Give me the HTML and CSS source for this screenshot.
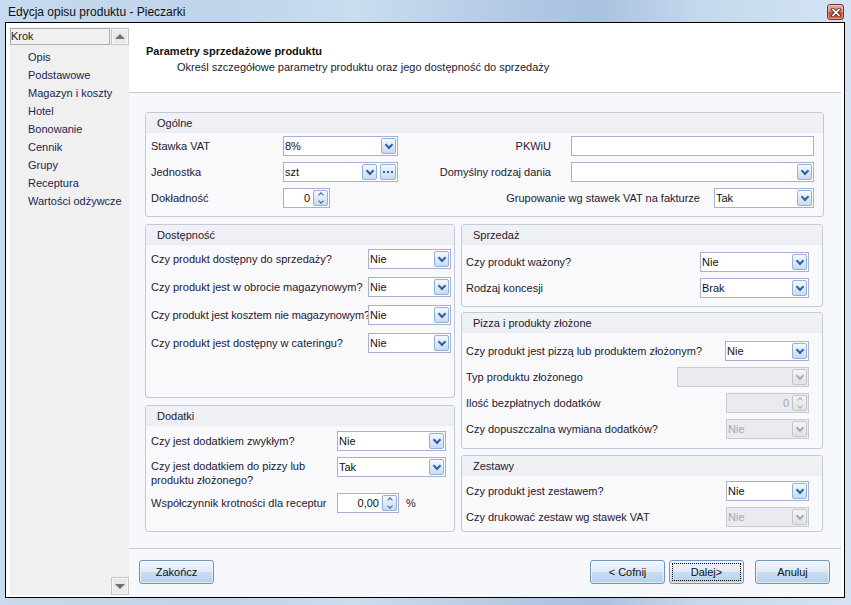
FILE: index.html
```html
<!DOCTYPE html>
<html lang="pl">
<head>
<meta charset="utf-8">
<title>Edycja opisu produktu - Pieczarki</title>
<link rel="stylesheet" href="styles.css">
</head>
<body>
<div class="window">
  <div class="titlebar">
    <span class="title">Edycja opisu produktu - Pieczarki</span>
    <span class="close"><svg width="10" height="9" viewBox="0 0 10 9"><path d="M2 1.5 L8 7.5 M8 1.5 L2 7.5" stroke="#5b2a22" stroke-width="3.4" stroke-linecap="square"/><path d="M2 1.5 L8 7.5 M8 1.5 L2 7.5" stroke="#ffffff" stroke-width="1.7" stroke-linecap="square"/></svg></span>
  </div>
  <div class="client">
    <aside class="sidebar">
      <div class="nav">
        <div class="nav-head">Krok</div>
        <ul class="nav-list">
          <li>Opis</li>
          <li>Podstawowe</li>
          <li>Magazyn i koszty</li>
          <li>Hotel</li>
          <li>Bonowanie</li>
          <li>Cennik</li>
          <li>Grupy</li>
          <li>Receptura</li>
          <li>Wartości odżywcze</li>
        </ul>
      </div>
      <div class="vscroll">
        <span class="sbtn up"></span>
        <span class="sbtn down"></span>
      </div>
    </aside>
    <main class="main">
      <header class="page-head">
        <h1>Parametry sprzedażowe produktu</h1>
        <p>Określ szczegółowe parametry produktu oraz jego dostępność do sprzedaży</p>
      </header>
      <div class="content">
        <section class="group h105">
          <div class="gh">Ogólne</div>
          <div class="og-body">
            <span class="lbl">Stawka VAT</span>
            <span class="field w115"><span class="val">8%</span><span class="dd"></span></span>
            <span class="og-r"><span class="lbl mr20">PKWiU</span><span class="field w243"></span></span>

            <span class="lbl">Jednostka</span>
            <span class="field w115"><span class="val">szt</span><span class="dd"></span><span class="dd ell"></span></span>
            <span class="og-r"><span class="lbl mr20">Domyślny rodzaj dania</span><span class="field w243"><span class="val"></span><span class="dd"></span></span></span>

            <span class="lbl">Dokładność</span>
            <span class="field w47"><span class="val num">0</span><span class="dd spin"></span></span>
            <span class="og-r"><span class="lbl mr14">Grupowanie wg stawek VAT na fakturze</span><span class="field w100"><span class="val">Tak</span><span class="dd"></span></span></span>
          </div>
        </section>

        <div class="cols">
          <div class="col col-left">
            <section class="group h174">
              <div class="gh">Dostępność</div>
              <div class="rows rows-dost">
                <div class="row"><span class="lbl">Czy produkt dostępny do sprzedaży?</span><span class="field w83"><span class="val">Nie</span><span class="dd"></span></span></div>
                <div class="row"><span class="lbl">Czy produkt jest w obrocie magazynowym?</span><span class="field w83"><span class="val">Nie</span><span class="dd"></span></span></div>
                <div class="row"><span class="lbl tight">Czy produkt jest kosztem nie magazynowym?</span><span class="field w83"><span class="val">Nie</span><span class="dd"></span></span></div>
                <div class="row"><span class="lbl">Czy produkt jest dostępny w cateringu?</span><span class="field w83"><span class="val">Nie</span><span class="dd"></span></span></div>
              </div>
            </section>
            <section class="group h127 mt7">
              <div class="gh">Dodatki</div>
              <div class="rows rows-dod">
                <div class="row"><span class="lbl fixed">Czy jest dodatkiem zwykłym?</span><span class="field w109"><span class="val">Nie</span><span class="dd"></span></span></div>
                <div class="row tall"><span class="lbl fixed two">Czy jest dodatkiem do pizzy lub<br>produktu złożonego?</span><span class="field w109"><span class="val">Tak</span><span class="dd"></span></span></div>
                <div class="row"><span class="lbl fixed">Współczynnik krotności dla receptur</span><span class="field w62"><span class="val num">0,00</span><span class="dd spin"></span></span><span class="pct">%</span></div>
              </div>
            </section>
          </div>

          <div class="col col-right">
            <section class="group h83">
              <div class="gh">Sprzedaż</div>
              <div class="rows rows-sprz">
                <div class="row"><span class="lbl">Czy produkt ważony?</span><span class="field w109"><span class="val">Nie</span><span class="dd"></span></span></div>
                <div class="row"><span class="lbl">Rodzaj koncesji</span><span class="field w109"><span class="val">Brak</span><span class="dd"></span></span></div>
              </div>
            </section>
            <section class="group h137 mt5">
              <div class="gh">Pizza i produkty złożone</div>
              <div class="rows rows-pizza">
                <div class="row"><span class="lbl">Czy produkt jest pizzą lub produktem złożonym?</span><span class="field w84"><span class="val">Nie</span><span class="dd"></span></span></div>
                <div class="row"><span class="lbl">Typ produktu złożonego</span><span class="field dis w132"><span class="val"></span><span class="dd"></span></span></div>
                <div class="row"><span class="lbl">Ilość bezpłatnych dodatków</span><span class="field dis w83"><span class="val num">0</span><span class="dd spin"></span></span></div>
                <div class="row"><span class="lbl">Czy dopuszczalna wymiana dodatków?</span><span class="field dis w83"><span class="val">Nie</span><span class="dd"></span></span></div>
              </div>
            </section>
            <section class="group h77 mt6">
              <div class="gh">Zestawy</div>
              <div class="rows rows-zest">
                <div class="row"><span class="lbl">Czy produkt jest zestawem?</span><span class="field w83"><span class="val">Nie</span><span class="dd"></span></span></div>
                <div class="row"><span class="lbl">Czy drukować zestaw wg stawek VAT</span><span class="field dis w83"><span class="val">Nie</span><span class="dd"></span></span></div>
              </div>
            </section>
          </div>
        </div>
      </div>
      <footer class="footer">
        <span class="btn btn-end">Zakończ</span>
        <span class="btn mr4">&lt; Cofnij</span>
        <span class="btn focus mr11">Dalej&gt;</span>
        <span class="btn">Anuluj</span>
      </footer>
    </main>
  </div>
</div>
</body>
</html>
```

FILE: styles.css
```css
* { box-sizing: border-box; }
html, body { margin: 0; padding: 0; }
body {
  width: 851px;
  height: 605px;
  overflow: hidden;
  font-family: "Liberation Sans", Arial, sans-serif;
  font-size: 11px;
  color: #1e2030;
}

.window {
  width: 851px;
  height: 605px;
  display: flex;
  flex-direction: column;
  background: linear-gradient(90deg, #c7daef 0%, #bfd4eb 25%, #cadcf0 42%, #b0c8e2 62%, #a9c2de 70%, #c4d8ed 82%, #d4e4f5 100%);
}

.titlebar {
  height: 22px;
  display: flex;
  align-items: center;
  padding-left: 8px;
}
.title {
  flex: 1;
  font-size: 12px;
  color: #111;
  padding-top: 2px;
}
.close {
  align-self: flex-start;
  width: 17px;
  height: 16px;
  margin: 4px 7px 0 0;
  border: 1px solid #6b3b33;
  border-radius: 3px;
  background: linear-gradient(#eab1a2 0%, #d9806a 45%, #c9482a 55%, #d46c4f 100%);
  box-shadow: inset 0 0 0 1px rgba(255,255,255,0.3);
  display: flex;
  align-items: center;
  justify-content: center;
}

.client {
  flex: 1;
  min-height: 0;
  margin: 0 6px 7px 5px;
  border: 1px solid #000;
  background: #fff;
  display: flex;
}

/* sidebar */
.sidebar {
  width: 119px;
  margin: 4px 0 2px 4px;
  background: #f0f0f0;
  display: flex;
}
.nav { width: 101px; }
.nav-head {
  width: 100px;
  height: 17px;
  margin-top: 1px;
  border: 1px solid #adadad;
  background: #f0f0f0;
  line-height: 15px;
  color: #1a1a1a;
}
.nav-list {
  list-style: none;
  margin: 0;
  padding: 3px 0 0 18px;
}
.nav-list li {
  line-height: 18px;
  white-space: nowrap;
  color: #1c2550;
}
.vscroll {
  width: 18px;
  display: flex;
  flex-direction: column;
  justify-content: space-between;
  padding-top: 1px;
}
.sbtn {
  height: 17px;
  border: 1px solid #c6c6c6;
  background: #e9e9e9;
  box-shadow: inset 0 0 0 1px #f6f6f6;
  display: flex;
  align-items: center;
  justify-content: center;
}
.sbtn.down { height: 18px; }
.sbtn.up::before {
  content: "";
  border-left: 5px solid transparent;
  border-right: 5px solid transparent;
  border-bottom: 5px solid #707070;
}
.sbtn.down::before {
  content: "";
  border-left: 5px solid transparent;
  border-right: 5px solid transparent;
  border-top: 5px solid #707070;
}

/* main */
.main {
  flex: 1;
  margin-right: 3px;
  display: flex;
  flex-direction: column;
  background: #f7f8fb;
}
.page-head {
  height: 70px;
  background: #fff;
  border-bottom: 1px solid #c6cadb;
  padding-top: 20px;
}
.page-head h1 {
  margin: 0;
  padding-left: 17px;
  font-size: 11px;
  font-weight: bold;
  line-height: 16px;
  color: #111;
}
.page-head p {
  margin: 0;
  padding-left: 48px;
  line-height: 16px;
  color: #1e2030;
}

.content {
  flex: 1;
  padding: 19px 17px 0 16px;
}

.group {
  border: 1px solid #c4c8dc;
  border-radius: 3px;
  background: #f9f9fb;
  overflow: hidden;
}
.gh {
  height: 20px;
  line-height: 20px;
  padding-left: 11px;
  background: linear-gradient(#f1f2f6, #eceef3);
  color: #1e2030;
}
.h105 { height: 105px; }
.h174 { height: 174px; }
.h127 { height: 127px; }
.h83 { height: 83px; }
.h137 { height: 137px; }
.h77 { height: 77px; }
.mt5 { margin-top: 5px; }
.mt6 { margin-top: 6px; }
.mt7 { margin-top: 7px; }

.og-body {
  display: grid;
  grid-template-columns: 132px 115px 1fr;
  grid-auto-rows: 20px;
  row-gap: 6px;
  align-items: center;
  padding: 3px 9px 0 5px;
}
.og-r {
  display: flex;
  justify-content: flex-end;
  align-items: center;
}
.mr20 { margin-right: 20px; }
.mr14 { margin-right: 14px; }

.cols {
  display: flex;
  gap: 6px;
  margin-top: 7px;
}
.col { display: flex; flex-direction: column; }
.col-left { width: 310px; }
.col-right { width: 362px; }

.rows {
  display: flex;
  flex-direction: column;
  gap: 8px;
}
.rows-dost { padding: 4px 3px 0 5px; }
.rows-dod { padding: 5px 8px 0 5px; gap: 6px; }
.rows-sprz { padding: 7px 13px 0 4px; gap: 6px; }
.rows-pizza { padding: 8px 13px 0 4px; gap: 6px; }
.rows-zest { padding: 5px 13px 0 4px; gap: 6px; }

.row {
  display: flex;
  align-items: center;
  height: 20px;
}
.row .lbl {
  flex: 1;
  min-width: 0;
  white-space: nowrap;
}
.row .lbl.tight { letter-spacing: -0.1px; }
.row .lbl.fixed { flex: 0 0 186px; }
.row.tall {
  height: auto;
  align-items: flex-start;
}
.lbl.two {
  white-space: normal;
  line-height: 14px;
  padding-top: 2px;
}
.lbl { white-space: nowrap; }
.pct { margin-left: 7px; }

/* editors */
.field {
  flex-shrink: 0;
  height: 20px;
  border: 1px solid #a9aed4;
  background: #fff;
  display: flex;
  align-items: center;
  padding: 1px;
  color: #111;
}
.field .val {
  flex: 1;
  min-width: 0;
  white-space: nowrap;
  overflow: hidden;
  line-height: 16px;
}
.field .val.num {
  text-align: right;
  padding-right: 3px;
}
.w47 { width: 47px; }
.w62 { width: 62px; }
.w83 { width: 83px; }
.w84 { width: 84px; }
.w100 { width: 100px; }
.w109 { width: 109px; }
.w115 { width: 115px; }
.w132 { width: 132px; }
.w243 { width: 243px; }

.dd {
  flex-shrink: 0;
  width: 15px;
  height: 16px;
  border: 1px solid #8fb2d8;
  border-radius: 2px;
  background: linear-gradient(#f5f9fd 0%, #dde9f7 50%, #c7dbf1 100%);
  display: flex;
  align-items: center;
  justify-content: center;
}
.dd::before {
  content: "";
  width: 4px;
  height: 4px;
  border-right: 2px solid #2f62a3;
  border-bottom: 2px solid #2f62a3;
  transform: rotate(45deg);
  margin-top: -3px;
}
.dd.ell {
  width: 16px;
  margin-left: 3px;
}
.dd.ell::before {
  width: 2px;
  height: 2px;
  border: 0;
  margin: 0;
  transform: none;
  background: #2f62a3;
  box-shadow: -4px 0 0 #2f62a3, 4px 0 0 #2f62a3;
}
.dd.spin {
  flex-direction: column;
  gap: 2px;
}
.dd.spin::before {
  width: 3px;
  height: 3px;
  border: 0;
  border-left: 1.5px solid #2f62a3;
  border-top: 1.5px solid #2f62a3;
  margin: 1px 0 0;
}
.dd.spin::after {
  content: "";
  width: 3px;
  height: 3px;
  border-right: 1.5px solid #2f62a3;
  border-bottom: 1.5px solid #2f62a3;
  transform: rotate(45deg);
  margin-bottom: 1px;
}

.field.dis {
  background: #eaebef;
  border-color: #c6c9d6;
  color: #a4a8b4;
}
.field.dis .dd {
  border-color: #c4c6ce;
  background: linear-gradient(#f4f4f5, #e1e2e5);
}
.field.dis .dd::before,
.field.dis .dd::after {
  border-color: #a9acb4;
}

/* footer */
.footer {
  height: 49px;
  border-top: 1px solid #c6cadb;
  display: flex;
  align-items: flex-start;
  padding: 11px 11px 0 10px;
}
.btn {
  position: relative;
  width: 75px;
  height: 24px;
  border: 1px solid #7096bc;
  border-radius: 3px;
  background: linear-gradient(#eef5fc 0%, #dfebf8 48%, #c9ddf1 52%, #b6d0ea 100%);
  box-shadow: inset 0 0 0 1px rgba(255,255,255,0.55);
  display: flex;
  align-items: center;
  justify-content: center;
  color: #111;
}
.btn-end { margin-right: auto; }
.mr4 { margin-right: 4px; }
.mr11 { margin-right: 11px; }
.btn.focus::after {
  content: "";
  position: absolute;
  inset: 2px;
  border: 1px dotted #000;
}
```
